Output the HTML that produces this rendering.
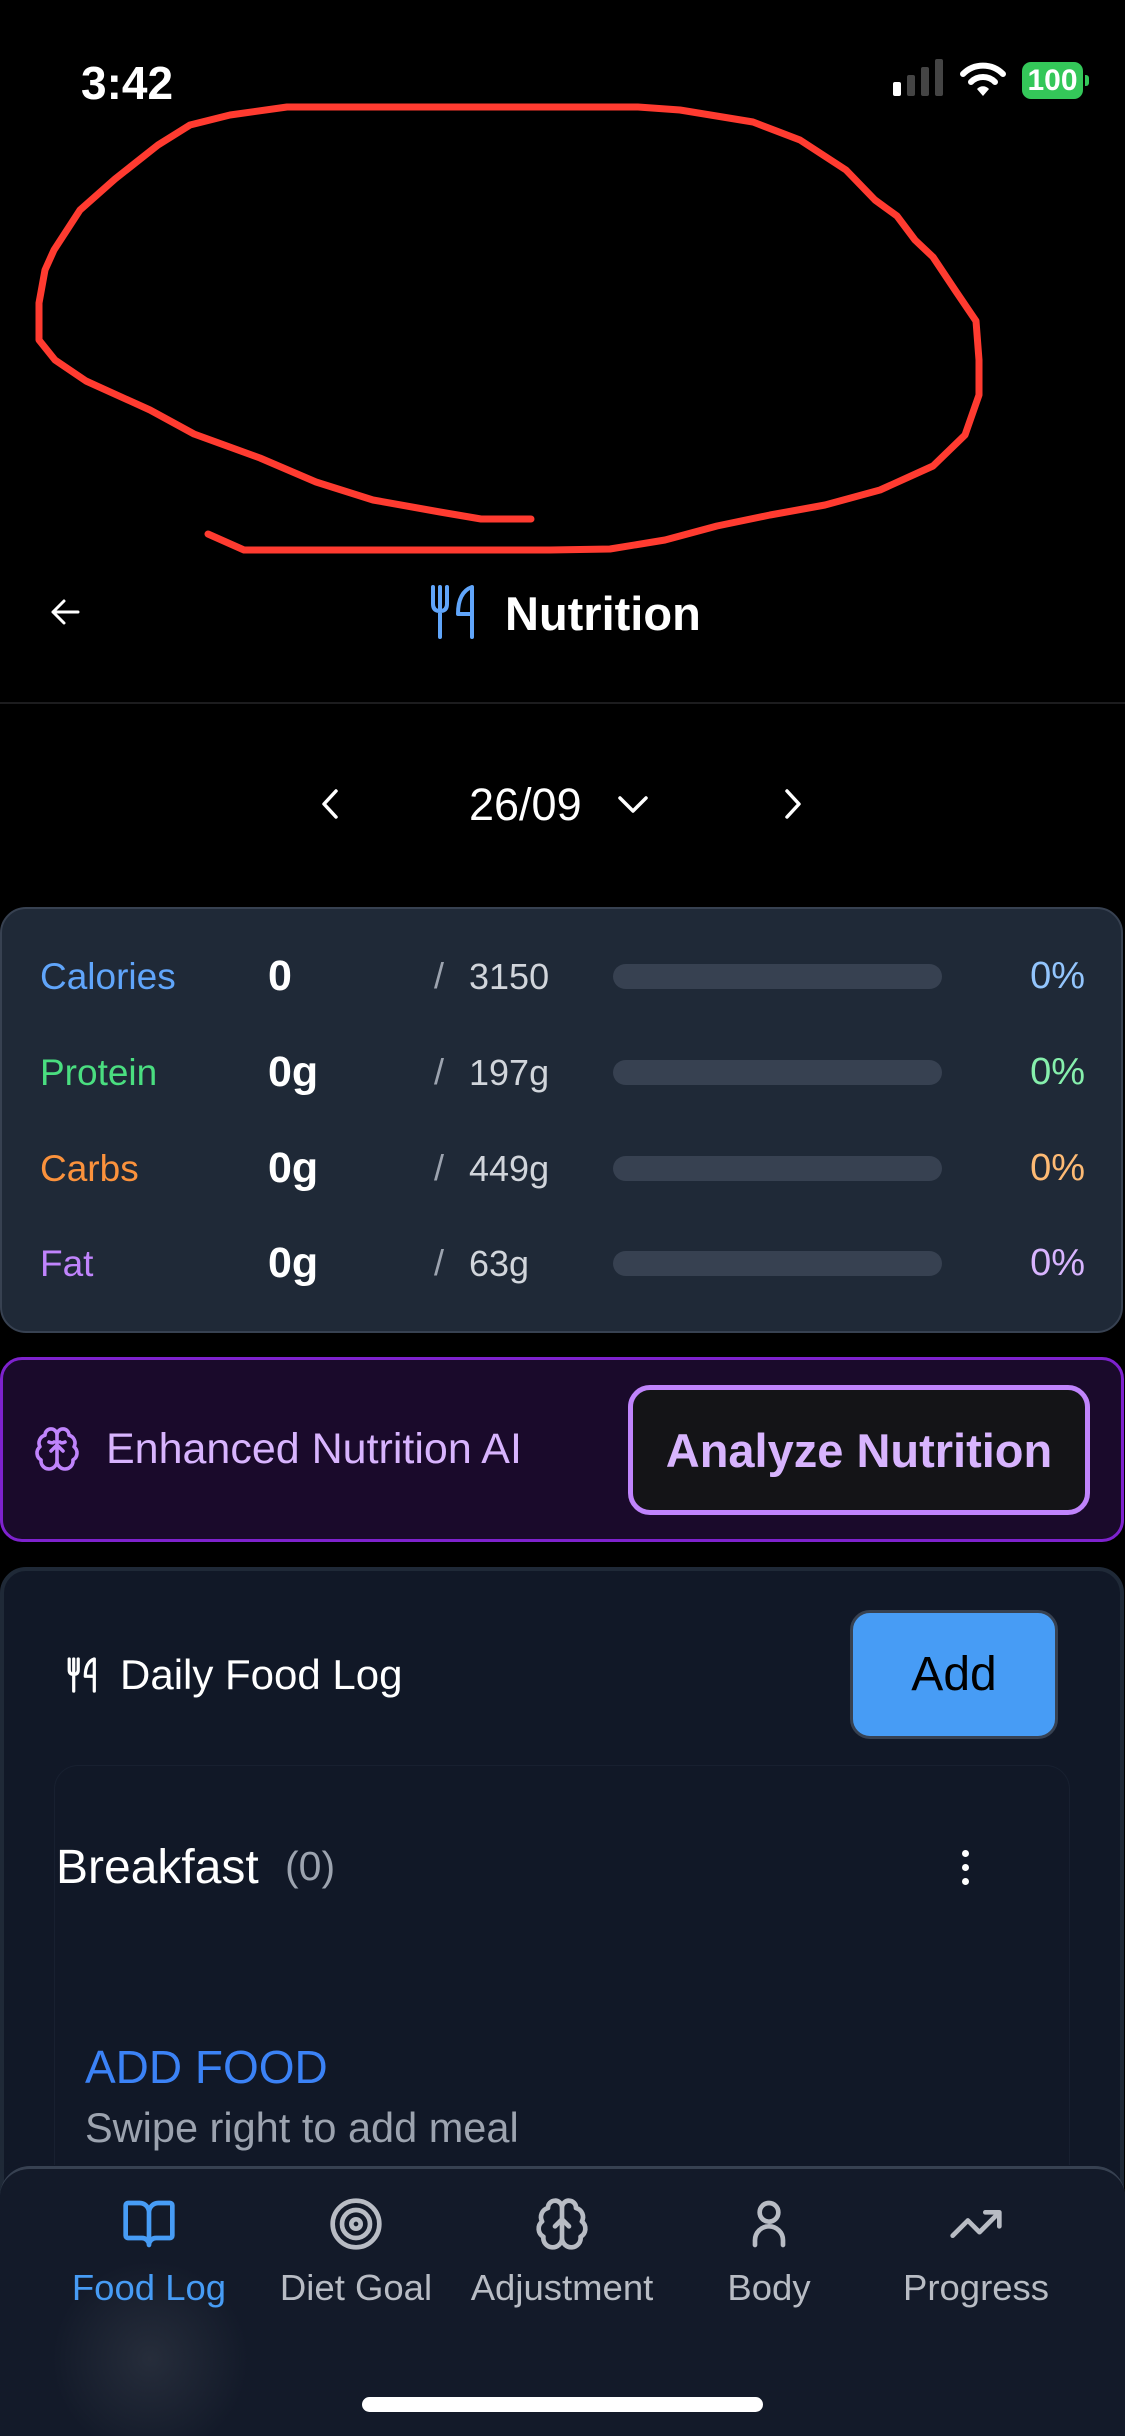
<!DOCTYPE html>
<html><head><meta charset="utf-8"><style>
*{margin:0;padding:0;box-sizing:border-box}
html,body{width:1125px;height:2436px;background:#000;overflow:hidden}
body{position:relative;font-family:"Liberation Sans",sans-serif;color:#fff}
.a{position:absolute}
.t{position:absolute;white-space:nowrap;line-height:1}
.bar{position:absolute;left:613px;width:329px;height:25px;border-radius:13px;background:#374151}
.lb{font-size:37px}
.vl{font-size:43px;font-weight:700}
.sl{font-size:36px;color:#9ca3af}
.tg{font-size:36px;color:#d1d5db}
.pc{font-size:38px;right:40px}
</style></head><body>
<!-- status -->
<div class="t" style="left:81px;top:60px;font-size:46px;font-weight:700">3:42</div>
<div class="a" style="left:893px;top:82px;width:8px;height:14px;background:#fff;border-radius:2px"></div>
<div class="a" style="left:907px;top:75px;width:8px;height:21px;background:#444;border-radius:2px"></div>
<div class="a" style="left:921px;top:67px;width:8px;height:29px;background:#444;border-radius:2px"></div>
<div class="a" style="left:935px;top:59px;width:8px;height:37px;background:#444;border-radius:2px"></div>
<svg class="a" style="left:960px;top:60px" width="46" height="38" viewBox="0 0 46 38"><path d="M3 14 A28 28 0 0 1 43 14" fill="none" stroke="#fff" stroke-width="6" stroke-linecap="round"/><path d="M11 22 A17 17 0 0 1 35 22" fill="none" stroke="#fff" stroke-width="6" stroke-linecap="round"/><path d="M17 29 L23 36 L29 29 A8 8 0 0 0 17 29Z" fill="#fff"/></svg>
<div class="a" style="left:1022px;top:62px;width:61px;height:37px;background:#34c759;border-radius:9px;color:#fff;font-size:30px;font-weight:700;text-align:center;line-height:37px">100</div>
<div class="a" style="left:1085px;top:75px;width:4px;height:11px;background:#34c759;border-radius:0 3px 3px 0"></div>
<!-- red scribble -->
<svg class="a" style="left:0;top:0" width="1125" height="600"><path d="M287 107 L638 107 L680 110 L753 122 L800 140 L846 170 L875 200 L897 216 L915 240 L933 257 L955 290 L976 321 L979 360 L979 395 L965 435 L933 466 L880 490 L825 505 L770 515 L717 526 L665 540 L610 549 L550 550 L244 550 L208 534 M531 519 L481 519 L440 512 L373 500 L316 482 L260 458 L194 434 L150 410 L86 381 L55 360 L39 340 L39 303 L45 270 L54 250 L80 210 L115 179 L158 145 L190 125 L230 115 L287 107" fill="none" stroke="#ff3b30" stroke-width="7" stroke-linecap="round" stroke-linejoin="round"/></svg>
<!-- header -->
<svg class="a" style="left:48px;top:596px" width="34" height="32" viewBox="0 0 34 32"><path d="M30 16H5M16 5L5 16L16 27" fill="none" stroke="#fff" stroke-width="3" stroke-linecap="round" stroke-linejoin="round"/></svg>
<svg class="a" style="left:428px;top:584px" width="56" height="56" viewBox="0 0 56 56"><path d="M5 3V20Q5 27 12 27Q19 27 19 20V3M12 3V53M44 53V3Q30 8 30 30H44" fill="none" stroke="#60a5fa" stroke-width="4" stroke-linecap="round" stroke-linejoin="round"/></svg>
<div class="t" style="left:505px;top:590px;font-size:47px;font-weight:700">Nutrition</div>
<div class="a" style="left:0;top:702px;width:1125px;height:2px;background:#1c1c1e"></div>
<!-- date -->
<svg class="a" style="left:318px;top:787px" width="24" height="34"><path d="M18 4L6 17L18 30" fill="none" stroke="#fff" stroke-width="3.5" stroke-linecap="round" stroke-linejoin="round"/></svg>
<div class="t" style="left:469px;top:782px;font-size:45px">26/09</div>
<svg class="a" style="left:616px;top:793px" width="34" height="24"><path d="M4 5L17 18L30 5" fill="none" stroke="#fff" stroke-width="3.5" stroke-linecap="round" stroke-linejoin="round"/></svg>
<svg class="a" style="left:781px;top:787px" width="24" height="34"><path d="M6 4L18 17L6 30" fill="none" stroke="#fff" stroke-width="3.5" stroke-linecap="round" stroke-linejoin="round"/></svg>
<!-- macro card -->
<div class="a" style="left:0;top:907px;width:1123px;height:426px;background:#1f2937;border:2px solid #374151;border-radius:26px"></div>
<div class="t lb" style="left:40px;top:958px;color:#60a5fa">Calories</div>
<div class="t vl" style="left:268px;top:955px">0</div>
<div class="t sl" style="left:434px;top:958px">/</div>
<div class="t tg" style="left:469px;top:959px">3150</div>
<div class="bar" style="top:964px"></div>
<div class="t pc" style="top:957px;color:#93c5fd">0%</div>

<div class="t lb" style="left:40px;top:1054px;color:#4ade80">Protein</div>
<div class="t vl" style="left:268px;top:1051px">0g</div>
<div class="t sl" style="left:434px;top:1054px">/</div>
<div class="t tg" style="left:469px;top:1055px">197g</div>
<div class="bar" style="top:1060px"></div>
<div class="t pc" style="top:1053px;color:#86efac">0%</div>

<div class="t lb" style="left:40px;top:1150px;color:#fb923c">Carbs</div>
<div class="t vl" style="left:268px;top:1147px">0g</div>
<div class="t sl" style="left:434px;top:1150px">/</div>
<div class="t tg" style="left:469px;top:1151px">449g</div>
<div class="bar" style="top:1156px"></div>
<div class="t pc" style="top:1149px;color:#fdba74">0%</div>

<div class="t lb" style="left:40px;top:1245px;color:#c084fc">Fat</div>
<div class="t vl" style="left:268px;top:1242px">0g</div>
<div class="t sl" style="left:434px;top:1245px">/</div>
<div class="t tg" style="left:469px;top:1246px">63g</div>
<div class="bar" style="top:1251px"></div>
<div class="t pc" style="top:1244px;color:#d8b4fe">0%</div>
<!-- AI card -->
<div class="a" style="left:0;top:1357px;width:1124px;height:185px;background:#1a0a2b;border:3px solid #7e22ce;border-radius:22px"></div>
<svg class="a" style="left:33px;top:1425px" width="48" height="48" viewBox="0 0 24 24"><path d="M12 5a3 3 0 1 0-5.997.125 4 4 0 0 0-2.526 5.77 4 4 0 0 0 .556 6.588A4 4 0 1 0 12 18Z M12 5a3 3 0 1 1 5.997.125 4 4 0 0 1 2.526 5.77 4 4 0 0 1-.556 6.588A4 4 0 1 1 12 18Z M12 5v13M9 13l3-3 3 3M8 8.5c1 .5 2 .5 2.5 0M16 8.5c-1 .5-2 .5-2.5 0" fill="none" stroke="#c084fc" stroke-width="1.8" stroke-linecap="round" stroke-linejoin="round"/></svg>
<div class="t" style="left:106px;top:1428px;font-size:43px;color:#d8b4fe">Enhanced Nutrition AI</div>
<div class="a" style="left:628px;top:1385px;width:462px;height:130px;background:#141417;border:5px solid #c084fc;border-radius:22px"></div>
<div class="t" style="left:628px;width:462px;text-align:center;top:1427px;font-size:47px;font-weight:700;color:#d8b4fe">Analyze Nutrition</div>
<!-- food log card -->
<div class="a" style="left:0;top:1567px;width:1124px;height:900px;background:#111827;border:4px solid #1f2937;border-radius:26px"></div>
<div class="a" style="left:54px;top:1765px;width:1016px;height:400px;border:1px solid #182030;border-bottom:none;border-radius:24px 24px 0 0"></div>
<svg class="a" style="left:66px;top:1657px" width="36" height="36" viewBox="0 0 56 56"><path d="M5 3V20Q5 27 12 27Q19 27 19 20V3M12 3V53M44 53V3Q30 8 30 30H44" fill="none" stroke="#fff" stroke-width="5" stroke-linecap="round" stroke-linejoin="round"/></svg>
<div class="t" style="left:120px;top:1654px;font-size:42px">Daily Food Log</div>
<div class="a" style="left:850px;top:1610px;width:208px;height:129px;background:#479cf5;border:3px solid #374151;border-radius:20px;color:#000;font-size:48px;font-weight:500;text-align:center;line-height:123px">Add</div>
<div class="t" style="left:56px;top:1844px;font-size:48px">Breakfast</div>
<div class="t" style="left:285px;top:1846px;font-size:41px;color:#9ca3af">(0)</div>
<div class="a" style="left:962px;top:1850px;width:7px;height:7px;border-radius:50%;background:#fff"></div>
<div class="a" style="left:962px;top:1864px;width:7px;height:7px;border-radius:50%;background:#fff"></div>
<div class="a" style="left:962px;top:1878px;width:7px;height:7px;border-radius:50%;background:#fff"></div>
<div class="t" style="left:85px;top:2044px;font-size:46px;color:#3b82f6">ADD FOOD</div>
<div class="t" style="left:85px;top:2107px;font-size:41.5px;color:#9ca3af">Swipe right to add meal</div>
<!-- bottom nav -->
<div class="a" style="left:0;top:2166px;width:1125px;height:300px;background:#131a29;border-top:3px solid #374151;border-radius:30px 30px 0 0;overflow:hidden"><div class="a" style="left:30px;top:80px;width:240px;height:220px;background:radial-gradient(circle,#262d3b 0%,rgba(19,26,41,0) 60%)"></div></div>
<svg class="a" style="left:121px;top:2196px" width="56" height="56" viewBox="0 0 24 24"><path d="M12 7v14M3 18a1 1 0 0 1-1-1V4a1 1 0 0 1 1-1h5a4 4 0 0 1 4 4 4 4 0 0 1 4-4h5a1 1 0 0 1 1 1v13a1 1 0 0 1-1 1h-6a3 3 0 0 0-3 3 3 3 0 0 0-3-3z" fill="none" stroke="#479cf5" stroke-width="2" stroke-linejoin="round"/></svg>
<svg class="a" style="left:328px;top:2196px" width="56" height="56" viewBox="0 0 24 24"><g fill="none" stroke="#b8bcc4" stroke-width="2"><circle cx="12" cy="12" r="10"/><circle cx="12" cy="12" r="6"/><circle cx="12" cy="12" r="2"/></g></svg>
<svg class="a" style="left:534px;top:2196px" width="56" height="56" viewBox="0 0 24 24"><path d="M12 5a3 3 0 1 0-5.997.125 4 4 0 0 0-2.526 5.77 4 4 0 0 0 .556 6.588A4 4 0 1 0 12 18Z M12 5a3 3 0 1 1 5.997.125 4 4 0 0 1 2.526 5.77 4 4 0 0 1-.556 6.588A4 4 0 1 1 12 18Z M12 5v13M9 13l3-3 3 3" fill="none" stroke="#b8bcc4" stroke-width="2" stroke-linecap="round" stroke-linejoin="round"/></svg>
<svg class="a" style="left:741px;top:2196px" width="56" height="56" viewBox="0 0 24 24"><g fill="none" stroke="#b8bcc4" stroke-width="2" stroke-linecap="round"><circle cx="12" cy="7" r="4"/><path d="M6 21v-2a6 6 0 0 1 12 0v2"/></g></svg>
<svg class="a" style="left:948px;top:2196px" width="56" height="56" viewBox="0 0 24 24"><path d="M22 7l-8.5 8.5-5-5L2 17M16 7h6v6" fill="none" stroke="#b8bcc4" stroke-width="2" stroke-linecap="round" stroke-linejoin="round"/></svg>
<div class="t" style="left:49px;width:200px;text-align:center;top:2270px;font-size:36.5px;color:#479cf5">Food Log</div>
<div class="t" style="left:256px;width:200px;text-align:center;top:2270px;font-size:36.5px;color:#b8bcc4">Diet Goal</div>
<div class="t" style="left:432px;width:260px;text-align:center;top:2270px;font-size:36.5px;color:#b8bcc4">Adjustment</div>
<div class="t" style="left:669px;width:200px;text-align:center;top:2270px;font-size:36.5px;color:#b8bcc4">Body</div>
<div class="t" style="left:876px;width:200px;text-align:center;top:2270px;font-size:36.5px;color:#b8bcc4">Progress</div>
<div class="a" style="left:362px;top:2397px;width:401px;height:15px;border-radius:8px;background:#fff"></div>
</body></html>
